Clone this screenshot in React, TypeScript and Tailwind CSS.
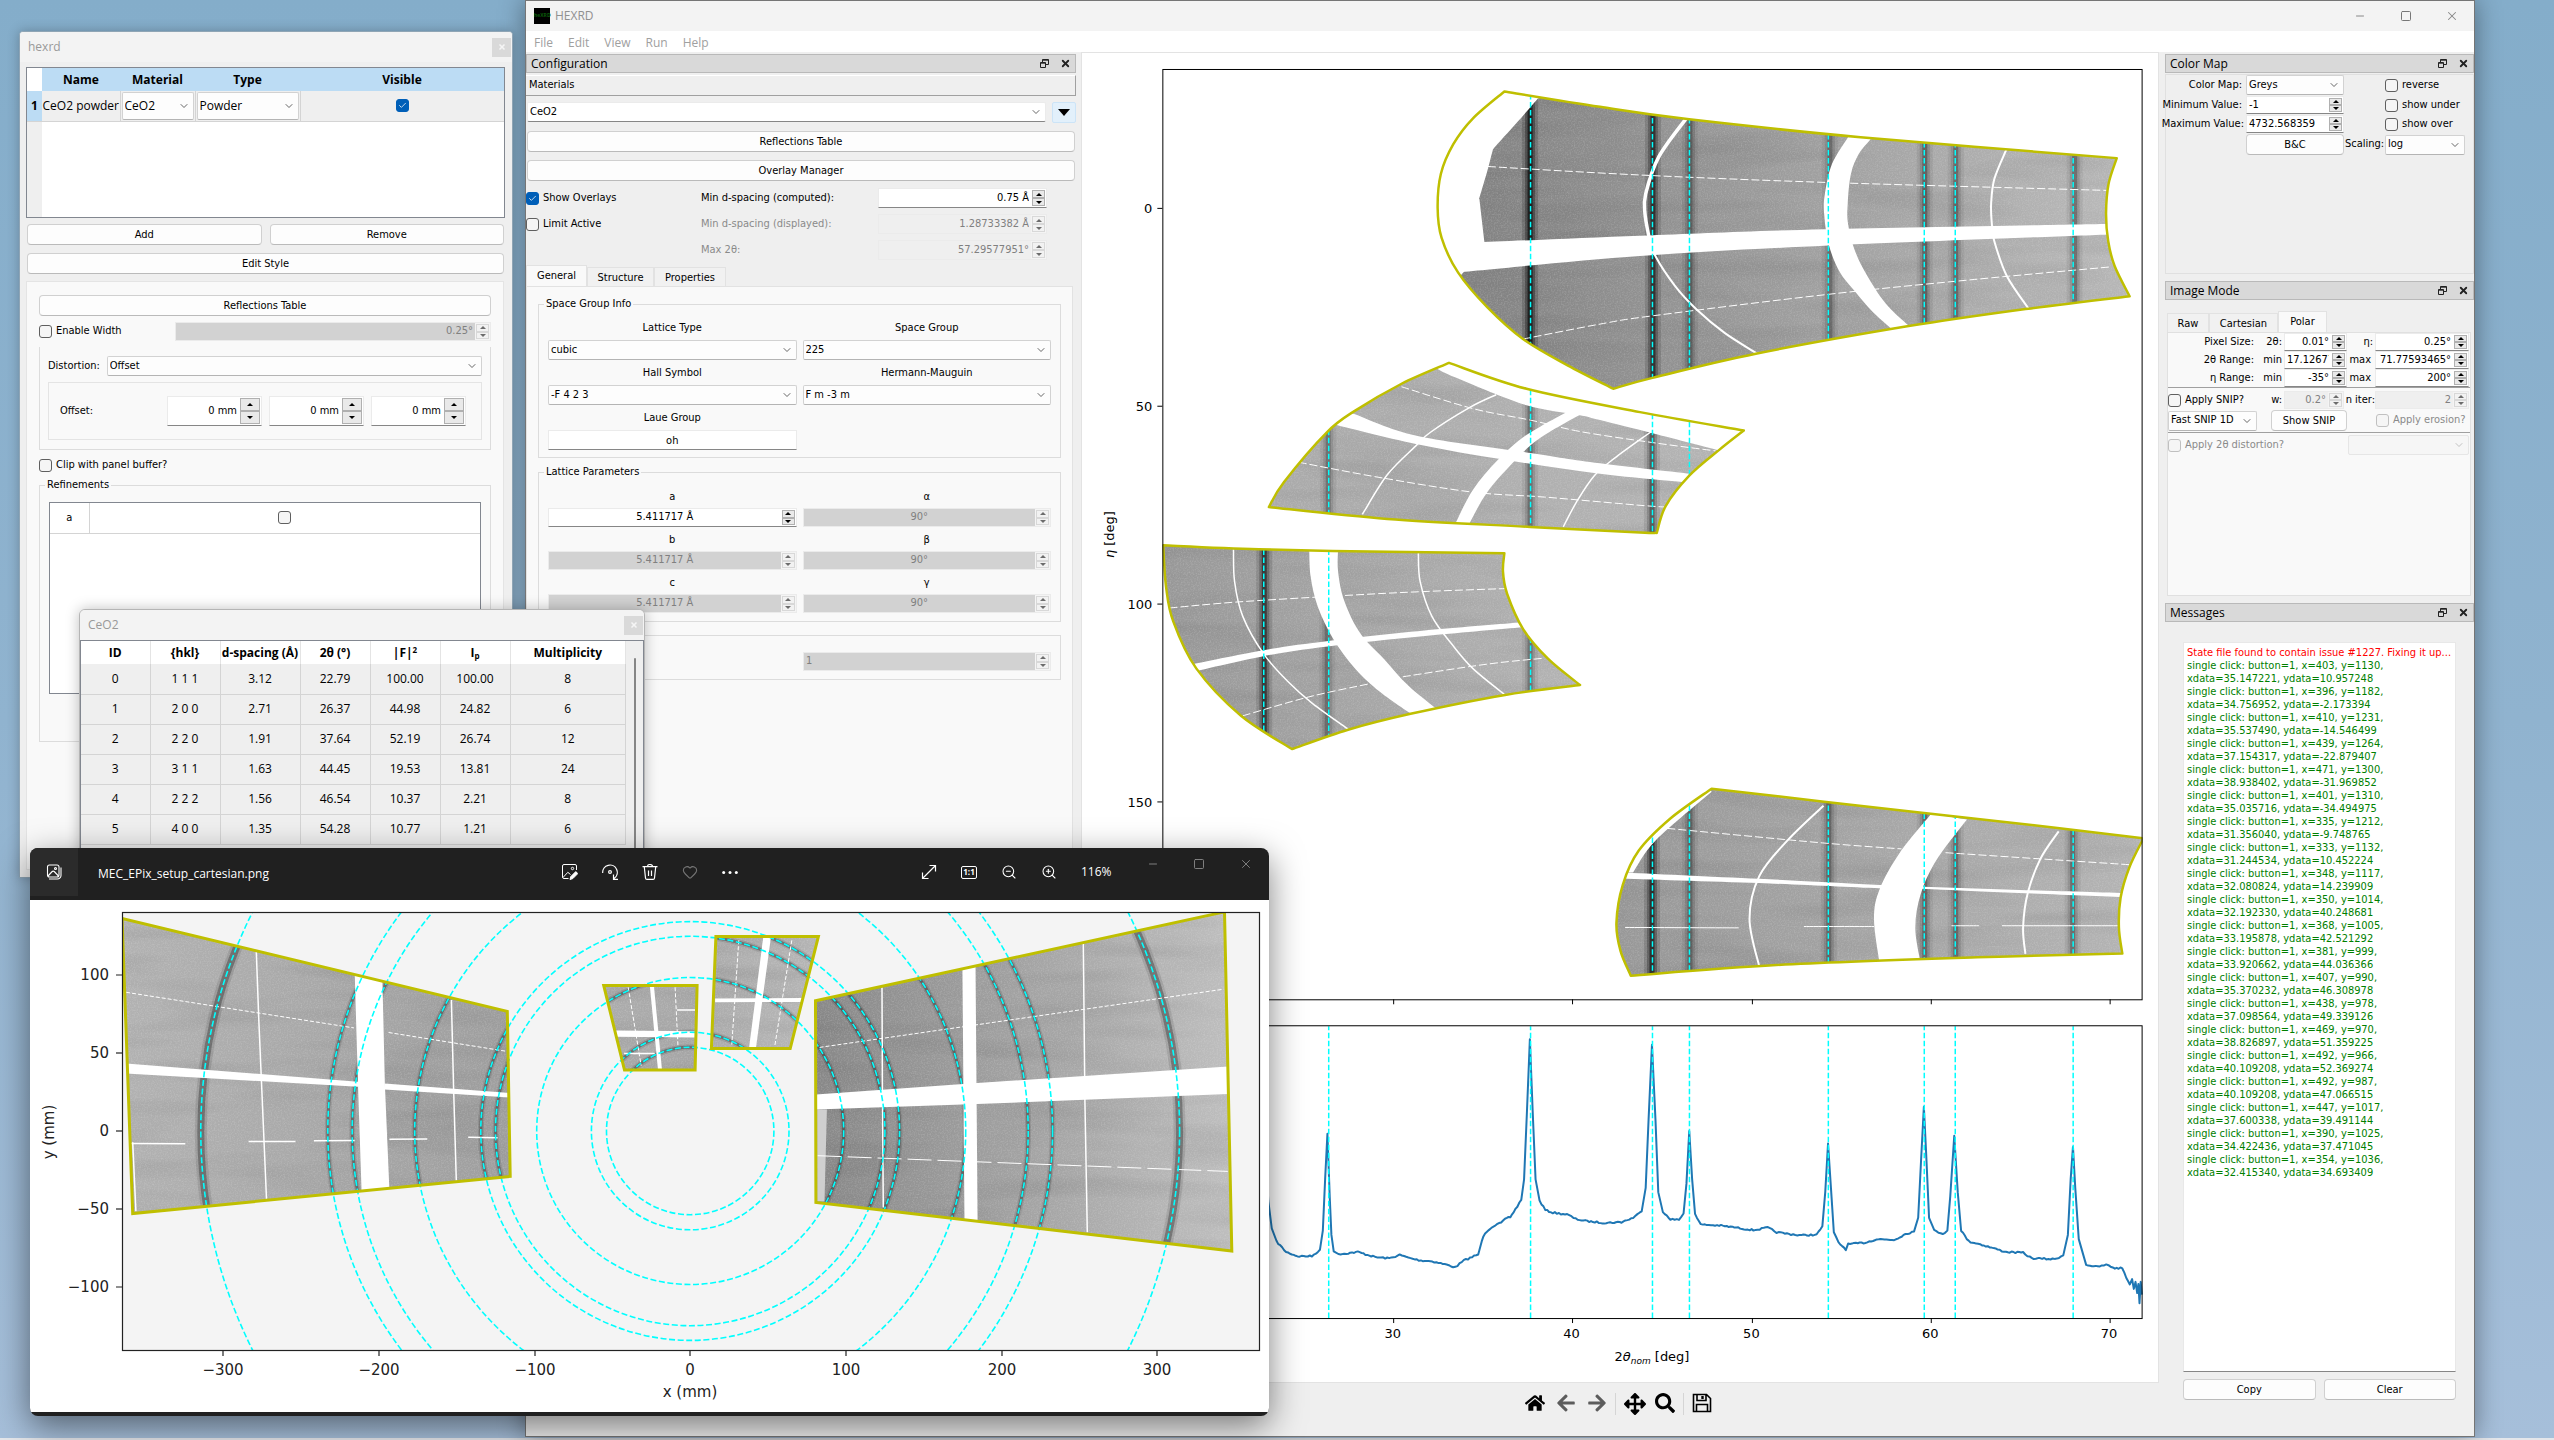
import React, { useId } from "react";
import { ChevronDown, Heart, Square, X, Minus, ZoomIn, ZoomOut, Check } from "lucide-react";
import { FaArrowLeft, FaArrowRight, FaArrowsAlt, FaHome, FaSearch } from "react-icons/fa";

/* ---------- geometry helpers ---------- */

type Pt = [number, number];
type Tile = (s: string) => Pt[];

const tile =
  (ox: number, oy: number, kx: number, ky: number): Tile =>
  (s) =>
    s.split(" ").map((p) => {
      const [x, y] = p.split(",").map(Number);
      return [ox + x / kx, oy + y / ky];
    });

const fmt = (n: number) => n.toFixed(1);

function curve(pts: Pt[], start: boolean): string {
  let d = `${start ? "M" : "L"}${fmt(pts[0][0])} ${fmt(pts[0][1])}`;
  for (let i = 0; i < pts.length - 1; i++) {
    const a = pts[Math.max(i - 1, 0)];
    const b = pts[i];
    const c = pts[i + 1];
    const e = pts[Math.min(i + 2, pts.length - 1)];
    d += `C${fmt(b[0] + (c[0] - a[0]) / 6)} ${fmt(b[1] + (c[1] - a[1]) / 6)} ${fmt(c[0] - (e[0] - b[0]) / 6)} ${fmt(
      c[1] - (e[1] - b[1]) / 6
    )} ${fmt(c[0])} ${fmt(c[1])}`;
  }
  return d;
}

const closed = (t: Tile, edges: string[]) => edges.map((e, i) => curve(t(e), i === 0)).join("") + "Z";
const open = (t: Tile, e: string) => curve(t(e), true);
const straight = (t: Tile, e: string) => "M" + t(e).map(([x, y]) => `${fmt(x)} ${fmt(y)}`).join("L");

/* ---------- polar view ---------- */

interface PanelData {
  id: string;
  t: Tile;
  outline: string[];
  gaps: string[][];
  lines: [string, number][];
  dashes: string[];
  bands: [number, number][];
  tones: [string, string];
}

const P = tile(1080, 0, 2.8, 2.0103);
const Q = tile(1260, 770, 1.7422, 2.3403);

const PEAKS = [1263, 1328, 1530, 1652, 1689, 1828, 1924, 1955, 2073];

const PANELS: PanelData[] = [
  {
    id: "p1",
    t: P,
    outline: [
      "1188,184 1456,215 1706,240 2186,276 2904,318",
      "2904,318 2881,370 2874,430 2880,485 2898,535 2940,596",
      "2940,596 2656,621 2321,656 1896,711 1603,760 1493,782",
      "1493,782 1365,735 1240,682 1140,618 1058,548 1012,478 1001,418 1010,350 1045,290 1100,238 1188,184",
    ],
    gaps: [
      ["1170,150 1290,196", "1282,198 1225,245 1156,300", "1156,300 1140,345", "1117,400 1118,400", "1132,487 1132,500", "1058,560 950,560", "950,150 1170,150"],
      ["1100,488 1568,474 2086,461 2900,450", "2900,471 2096,494 1568,515 1040,549"],
      ["2157,266 2151,276 2106,330 2086,390 2084,430 2096,490 2126,545 2169,585 2221,628 2290,672", "2345,668 2321,655 2256,610 2201,550 2168,500 2151,450 2150,410 2159,350 2181,310 2214,280 2225,268"],
    ],
    lines: [
      ["1700,236 1621,315 1584,390 1582,430 1594,480", 3.5],
      ["1594,480 1611,515 1666,575 1726,622 1806,670 1900,713", 2],
      ["2595,300 2561,360 2552,410 2554,450 2561,485 2596,555 2660,624", 2],
    ],
    dashes: ["1142,335 1568,352 2096,367 2876,383", "1240,682 1456,652 1606,635 2096,592 2506,562 2885,537"],
    bands: [[1530, 1], [1653, 0.8], [1690, 0.4], [1830, 0.35], [1925, 0.45], [1956, 0.4], [2075, 0.4]],
    tones: ["#808080", "#bababa"],
  },
  {
    id: "p2",
    t: P,
    outline: [
      "1033,730 1250,782 1568,829 1859,866",
      "1859,866 1790,905 1706,957 1640,1018 1615,1072",
      "1615,1072 1568,1071 1260,1060 860,1044 528,1020",
      "528,1020 570,970 690,870 770,826 900,772 1033,730",
    ],
    gaps: [
      ["990,725 1000,742 1080,768 1250,815 1400,835 1456,845 1606,872 1800,908", "1880,860 1400,790 1033,720"],
      ["745,827 765,832 945,877 1250,910 1456,932 1720,954", "1720,972 1456,953 1190,925 940,893 700,852"],
      ["1370,826 1250,875 1170,925 1100,985 1050,1054", "1088,1056 1140,990 1220,925 1290,880 1420,826"],
    ],
    lines: [
      ["1165,794 1090,820 980,870 940,897 860,955 790,1035", 1.5],
      ["1600,868 1500,920 1440,957 1390,1010 1353,1060", 1.5],
    ],
    dashes: ["900,778 1100,822 1260,845 1400,868 1600,890 1780,907", "612,930 850,962 1100,990 1300,1000 1560,1016 1640,1020"],
    bands: [[1328, 0.35], [1530, 0.4], [1652, 0.55]],
    tones: ["#aaaaaa", "#b4b4b4"],
  },
  {
    id: "p3",
    t: P,
    outline: [
      "232,1097 500,1105 860,1110 1188,1113",
      "1188,1113 1184,1150 1196,1195 1240,1265 1310,1325 1400,1378",
      "1400,1378 1190,1398 925,1436 750,1468 593,1507",
      "593,1507 450,1440 325,1345 260,1250 240,1180 232,1097",
    ],
    gaps: [
      ["300,1338 513,1308 700,1289 1000,1266 1250,1251", "1250,1261 1000,1277 720,1298 513,1320 300,1354"],
      ["641,1100 645,1160 665,1220 708,1285 770,1345 840,1392 935,1440", "1005,1430 920,1380 850,1325 785,1275 740,1210 722,1150 722,1104"],
    ],
    lines: [
      ["429,1105 432,1170 455,1240 513,1315 580,1370 650,1415 750,1467", 1.5],
      ["947,1112 952,1170 985,1240 1040,1295 1100,1345 1190,1398", 1.5],
    ],
    dashes: ["250,1223 440,1211 740,1198 960,1190 1190,1184", "455,1440 640,1402 820,1374 900,1362 1140,1336 1300,1324"],
    bands: [[1264, 0.75], [1327, 0.35], [1530, 0.35]],
    tones: ["#989898", "#b4b4b4"],
  },
  {
    id: "p4",
    t: Q,
    outline: [
      "787,45 1130,98 1390,137 1540,161",
      "1540,161 1515,230 1500,300 1497,370 1503,431",
      "1503,431 1250,440 900,458 646,483",
      "646,483 628,425 621,360 632,270 660,190 715,115 787,45",
    ],
    gaps: [
      ["630,241 870,256 1090,271 1300,281 1520,290", "1520,300 1300,288 1160,280 1088,279 870,266 620,255"],
      ["1170,104 1115,195 1080,280 1070,350 1080,455", "1151,452 1142,370 1152,290 1180,210 1232,117"],
      ["650,241 690,165 787,52", "780,40 640,150 630,241"],
    ],
    lines: [
      ["982,85 920,165 870,250 853,350 870,462", 2],
      ["1392,145 1360,210 1338,290 1330,370 1334,432", 2],
      ["636,370 834,371", 1],
      ["948,368 1070,368", 1],
      ["1205,366 1253,366", 1],
      ["1293,366 1495,366", 1],
    ],
    dashes: ["710,138 980,172 1118,186", "1195,195 1515,223"],
    bands: [[1652, 0.85], [1690, 0.4], [1829, 0.4], [1925, 0.4], [1956, 0.4], [2073, 0.4]],
    tones: ["#989898", "#b4b4b4"],
  },
];

function Grain() {
  return (
    <defs>
      <filter id="grain" x="0" y="0" width="100%" height="100%">
        <feTurbulence type="fractalNoise" baseFrequency="0.7" numOctaves="2" seed="4" />
        <feColorMatrix values="0 0 0 0 1  0 0 0 0 1  0 0 0 0 1  1.2 0 0 0 -0.48" />
      </filter>
      <filter id="streak" x="0" y="0" width="100%" height="100%">
        <feTurbulence type="fractalNoise" baseFrequency="0.006 0.05" numOctaves="2" seed="9" />
        <feColorMatrix values="0 0 0 0 0  0 0 0 0 0  0 0 0 0 0  0.9 0 0 0 -0.4" />
      </filter>
    </defs>
  );
}

function PolarPanel({ p }: { p: PanelData }) {
  const d = closed(p.t, p.outline);
  return (
    <g>
      <clipPath id={p.id}>
        <path d={d} />
      </clipPath>
      <linearGradient id={p.id + "g"}>
        <stop offset="0" stopColor={p.tones[0]} />
        <stop offset="1" stopColor={p.tones[1]} />
      </linearGradient>
      <g clipPath={`url(#${p.id})`}>
        <path d={d} fill={`url(#${p.id}g)`} />
        <rect x="1162" y="70" width="981" height="930" filter="url(#streak)" opacity="0.18" />
        <rect x="1162" y="70" width="981" height="930" filter="url(#grain)" opacity="0.3" />
        {p.bands.map(([x, k]) => (
          <g key={x} stroke="#000">
            <line x1={x} x2={x} y1="70" y2="1000" strokeWidth="16" opacity={0.16 * k} />
            <line x1={x} x2={x} y1="70" y2="1000" strokeWidth="10" opacity={0.3 * k} />
            <line x1={x} x2={x} y1="70" y2="1000" strokeWidth="5" opacity={0.6 * k} />
          </g>
        ))}
        {p.gaps.map((g, i) => (
          <path key={i} d={closed(p.t, g)} fill="#fff" />
        ))}
        {p.lines.map(([s, w]) => (
          <path key={s} d={open(p.t, s)} fill="none" stroke="#fff" strokeWidth={w} />
        ))}
        {p.dashes.map((s) => (
          <path key={s} d={open(p.t, s)} fill="none" stroke="#fff" strokeWidth="1" strokeDasharray="8 3" />
        ))}
        {PEAKS.map((x) => (
          <line key={x} x1={x + 0.5} x2={x + 0.5} y1="70" y2="1000" stroke="#00ffff" strokeWidth="1.5" strokeDasharray="5.5 2.5" />
        ))}
      </g>
      <path d={d} fill="none" stroke="#bfbf00" strokeWidth="2.5" strokeLinejoin="round" />
    </g>
  );
}

const LINEOUT =
  "12,960 14,1010 20,1075 28,1105 45,1130 65,1140 90,1140 104,1125 109,1080 113,960 117,853 121,1000 124,1090 128,1130 140,1135 170,1130 200,1142 225,1145 243,1137 262,1145 280,1150 300,1152 325,1160 340,1166 355,1150 380,1136 386,1105 392,1085 405,1070 420,1062 430,1050 436,1048 445,1030 455,1008 460,960 465,800 470,632 475,800 480,960 487,1010 497,1032 510,1038 535,1042 550,1053 570,1058 600,1062 630,1060 650,1050 665,1035 672,980 677,820 683,645 689,820 694,990 702,1035 715,1053 730,1055 738,1040 743,970 748,847 753,960 758,1040 768,1066 800,1068 830,1073 860,1079 885,1073 900,1084 940,1091 970,1090 980,1070 985,990 990,876 995,980 1000,1085 1008,1108 1021,1124 1025,1112 1055,1108 1075,1100 1105,1102 1125,1088 1140,1082 1147,1050 1152,920 1157,790 1161,900 1166,1050 1175,1080 1190,1087 1198,1080 1203,1000 1210,858 1216,990 1222,1080 1235,1105 1255,1112 1275,1120 1300,1130 1330,1132 1345,1145 1385,1147 1400,1138 1408,1090 1413,960 1417,884 1421,980 1427,1100 1440,1160 1460,1165 1475,1160 1490,1168 1503,1168 1510,1190 1516,1205 1520,1195 1523,1215 1526,1200 1529,1225 1531,1205 1533,1250 1535,1200 1537,1230";

function lineout(): string {
  const pts = Q(LINEOUT);
  const out: Pt[] = [];
  let seed = 7;
  const rnd = () => {
    seed = (seed * 16807) % 2147483647;
    return seed / 2147483647 - 0.5;
  };
  for (let i = 0; i < pts.length - 1; i++) {
    const [ax, ay] = pts[i];
    const [bx, by] = pts[i + 1];
    const flat = Math.abs(by - ay) < 12;
    const n = flat ? Math.max(1, Math.round((bx - ax) / 2)) : 1;
    for (let k = 0; k < n; k++) {
      const f = k / n;
      out.push([ax + (bx - ax) * f, ay + (by - ay) * f + (flat ? rnd() * 1.6 : 0)]);
    }
  }
  out.push(pts[pts.length - 1]);
  return "M" + out.map(([x, y]) => `${fmt(x)} ${fmt(y)}`).join("L");
}

function PolarPlot() {
  return (
    <svg viewBox="1082 53 1076 1330" className="h-full w-full" fontFamily="'DejaVu Sans', sans-serif" fontSize="13" role="img" aria-label="Polar view">
      <Grain />
      <clipPath id="axTop">
        <rect x="1162" y="69" width="981" height="932" />
      </clipPath>
      <g clipPath="url(#axTop)">
        {PANELS.map((p) => (
          <PolarPanel key={p.id} p={p} />
        ))}
      </g>
      <rect x="1162.5" y="69.5" width="980" height="931" fill="none" stroke="#000" />
      <path d={lineout()} fill="none" stroke="#1f77b4" strokeWidth="2" strokeLinejoin="round" />
      {PEAKS.map((x) => (
        <line key={x} x1={x + 0.5} x2={x + 0.5} y1="1319" y2="1027" stroke="#00ffff" strokeWidth="1.5" strokeDasharray="5.5 2.5" />
      ))}
      <rect x="1162.5" y="1026.5" width="980" height="293" fill="none" stroke="#000" />
      {[30, 40, 50, 60, 70].map((v, i) => {
        const x = Math.round(1393 + i * 179.3) + 0.5;
        return (
          <g key={v}>
            <path d={`M${x} 1000v5M${x} 1319v5`} stroke="#000" />
            <text x={x - 1} y="1339" textAnchor="middle">
              {v}
            </text>
          </g>
        );
      })}
      {[0, 50, 100, 150].map((v) => {
        const y = Math.round(208 + v * 3.961) + 0.5;
        return (
          <g key={v}>
            <path d={`M1157 ${y}h5`} stroke="#000" />
            <text x="1152" y={y + 5} textAnchor="end">
              {v}
            </text>
          </g>
        );
      })}
      <text x="1652" y="1362" textAnchor="middle">
        2<tspan fontStyle="italic">θ</tspan>
        <tspan fontStyle="italic" fontSize="9" dy="3">
          nom
        </tspan>
        <tspan dy="-3"> [deg]</tspan>
      </text>
      <text transform="translate(1114 535) rotate(-90)" textAnchor="middle">
        <tspan fontStyle="italic">η</tspan> [deg]
      </text>
    </svg>
  );
}

/* ---------- cartesian view ---------- */

const D = tile(20, 840, 2.45, 2.6133);
const RADII = [83.7, 98.8, 153.5, 194.7, 209.4, 275.5, 338, 362.4, 489.4];

interface FlatPanel {
  id: string;
  outline: string;
  gaps: string[];
  lines: string[];
  dashes: string[];
  long: string[];
  tones: [string, string];
  pale?: string;
}

const FLAT: FlatPanel[] = [
  {
    id: "c1",
    outline: "250,205 1194,448 1201,879 276,976",
    gaps: [
      "820,350 888,365 894,640 905,915 837,920 828,640",
      "260,584 828,632 828,645 260,610",
      "893,636 1200,661 1200,673 893,652",
    ],
    lines: ["579,292 585,470 604,938", "1057,418 1062,640 1069,890", "276,790 284,970", "272,793 405,794", "560,788 675,788", "720,786 820,785", "905,782 998,781", "1098,777 1170,778"],
    dashes: ["260,398 818,491", "903,503 1190,552"],
    long: [],
    tones: ["#b2b2b2", "#9e9e9e"],
  },
  {
    id: "c2",
    outline: "1430,380 1659,380 1654,601 1481,601",
    gaps: ["1460,498 1657,500 1657,516 1460,514", "1543,380 1553,380 1573,601 1563,601"],
    lines: ["1480,558 1555,558", "1610,444 1655,444"],
    dashes: ["1490,385 1522,590", "1605,385 1612,540"],
    long: [],
    tones: ["#acacac", "#a8a8a8"],
  },
  {
    id: "c3",
    outline: "1705,252 1956,252 1887,545 1694,545",
    gaps: ["1821,252 1840,252 1803,545 1786,545", "1703,414 1920,413 1918,423 1703,424"],
    lines: [],
    dashes: ["1761,262 1744,535", "1891,262 1849,540"],
    long: [],
    tones: ["#acacac", "#b8b8b8"],
  },
  {
    id: "c4",
    outline: "1949,420 2951,188 2969,1074 1950,947",
    gaps: ["2309,330 2341,320 2346,1000 2314,1000", "1950,665 2345,635 2960,592 2960,664 2345,690 1950,704"],
    lines: ["2112,385 2113,650 2115,960", "2605,268 2609,680 2615,1025"],
    dashes: ["1959,542 2949,390"],
    long: ["1954,825 2959,866"],
    tones: ["#888888", "#bebebe"],
    pale: "1953,704 1977,704 1971,945 1953,945",
  },
];

function CartesianPlot() {
  const cx = 690.2;
  const cy = 1131;
  return (
    <svg viewBox="30 900 1239 512" className="block w-full" fontFamily="'DejaVu Sans', sans-serif" fontSize="15" role="img" aria-label="Cartesian view">
      <rect x="122" y="912" width="1138" height="438" fill="#f4f4f4" />
      <clipPath id="axCart">
        <rect x="122" y="912" width="1138" height="438" />
      </clipPath>
      <g clipPath="url(#axCart)">
        {FLAT.map((p) => (
          <g key={p.id}>
            <clipPath id={p.id}>
              <path d={straight(D, p.outline) + "Z"} />
            </clipPath>
            <linearGradient id={p.id + "g"}>
              <stop offset="0" stopColor={p.tones[0]} />
              <stop offset="1" stopColor={p.tones[1]} />
            </linearGradient>
            <g clipPath={`url(#${p.id})`}>
              <path d={straight(D, p.outline) + "Z"} fill={`url(#${p.id}g)`} />
              <rect x="122" y="912" width="1138" height="438" filter="url(#streak)" opacity="0.18" />
              <rect x="122" y="912" width="1138" height="438" filter="url(#grain)" opacity="0.3" />
              {RADII.map((r) => (
                <g key={r} fill="none" stroke="#000">
                  <circle cx={cx} cy={cy} r={r} strokeWidth={r > 450 ? 12 : 6} opacity="0.1" />
                  <circle cx={cx} cy={cy} r={r} strokeWidth={r > 450 ? 7 : 3} opacity="0.28" />
                </g>
              ))}
              {p.pale && <path d={straight(D, p.pale) + "Z"} fill="#cfcfcf" />}
              {p.gaps.map((g) => (
                <path key={g} d={straight(D, g) + "Z"} fill="#fff" />
              ))}
              {p.lines.map((g) => (
                <path key={g} d={straight(D, g)} fill="none" stroke="#fff" strokeWidth="1.5" />
              ))}
              {p.dashes.map((g) => (
                <path key={g} d={straight(D, g)} fill="none" stroke="#fff" strokeDasharray="4 2" />
              ))}
              {p.long.map((g) => (
                <path key={g} d={straight(D, g)} fill="none" stroke="#fff" strokeDasharray="24 6" />
              ))}
            </g>
          </g>
        ))}
        {RADII.map((r) => (
          <circle key={r} cx={cx} cy={cy} r={r} fill="none" stroke="#00ffff" strokeWidth="1.6" strokeDasharray="6 2.6" />
        ))}
        {FLAT.map((p) => (
          <path key={p.id} d={straight(D, p.outline) + "Z"} fill="none" stroke="#bfbf00" strokeWidth="3" />
        ))}
      </g>
      <rect x="122.5" y="912.5" width="1137" height="438" fill="none" stroke="#222" strokeWidth="1.2" />
      {[-300, -200, -100, 0, 100, 200, 300].map((v) => {
        const x = Math.round(cx + v * 1.557);
        return (
          <g key={v}>
            <path d={`M${x} 1350v6`} stroke="#222" strokeWidth="1.2" />
            <text x={x} y="1375" textAnchor="middle" fill="#222">
              {String(v).replace("-", "−")}
            </text>
          </g>
        );
      })}
      {[100, 50, 0, -50, -100].map((v) => {
        const y = Math.round(cy - v * 1.561);
        return (
          <g key={v}>
            <path d={`M122 ${y}h-6`} stroke="#222" strokeWidth="1.2" />
            <text x="109" y={y + 5} textAnchor="end" fill="#222">
              {String(v).replace("-", "−")}
            </text>
          </g>
        );
      })}
      <text x="690" y="1397" textAnchor="middle" fill="#222">
        x (mm)
      </text>
      <text transform="translate(54 1132) rotate(-90)" textAnchor="middle" fill="#222">
        y (mm)
      </text>
    </svg>
  );
}

/* ---------- controls ---------- */

function Btn({ children, className = "" }: { children: React.ReactNode; className?: string }) {
  return (
    <button type="button" className={`h-[21px] rounded border border-[#d0d0d0] border-b-[#bababa] bg-[#fdfdfd] leading-none ${className}`}>
      {children}
    </button>
  );
}

function Combo({ value, label, className = "", look = "border-[#d2d2d2] border-b-[#b4b4b4] bg-[#fdfdfd]", disabled = false }: { value: string; label: string; className?: string; look?: string; disabled?: boolean }) {
  return (
    <div className={`relative ${className}`}>
      <select aria-label={label} disabled={disabled} defaultValue={value} className={`h-5 w-full appearance-none rounded-xs border pl-0.5 ${look}`}>
        <option>{value}</option>
      </select>
      <ChevronDown className={`pointer-events-none absolute top-1 right-1 size-3 ${disabled ? "text-[#bbb]" : "text-[#555]"}`} strokeWidth={1.8} />
    </div>
  );
}

function Spin({
  value,
  label,
  className = "h-[19px]",
  align = "text-right",
  off = "",
  wide = false,
}: {
  value: string;
  label: string;
  className?: string;
  align?: string;
  off?: "" | "dark" | "light";
  wide?: boolean;
}) {
  const disabled = off !== "";
  const field = off === "dark" ? "bg-[#d2d2d2] text-[#808080]" : off === "light" ? "bg-[#efefef] text-[#808080]" : "bg-white text-black";
  return (
    <div className={`flex border border-[#ebebeb] ${disabled ? "bg-[#f4f4f4]" : "border-b-[#868686] bg-white"} ${className}`}>
      <input aria-label={label} disabled={disabled} defaultValue={value} className={`w-0 min-w-0 flex-1 px-0.5 ${align} ${field}`} />
      <div className={`flex shrink-0 flex-col p-px ${wide ? "w-[22px]" : "w-[15px]"}`}>
        {["up", "down"].map((dir) => (
          <button
            key={dir}
            type="button"
            disabled={disabled}
            aria-label={`${label} ${dir}`}
            className={`grid min-h-0 flex-1 place-items-center border ${disabled ? "border-[#d8d8d8] bg-[#f2f2f2]" : "border-[#b0b0b0] bg-[#e9e9e9]"}`}
          >
            <svg viewBox="0 0 6 3" className={`h-[3px] w-1.5 ${disabled ? "fill-[#6c6c6c]" : "fill-black"}`}>
              <path d={dir === "up" ? "M0 3L3 0L6 3Z" : "M0 0L3 3L6 0Z"} />
            </svg>
          </button>
        ))}
      </div>
    </div>
  );
}

function Tick({ label, checked = false, disabled = false, hidden = false, className = "" }: { label: string; checked?: boolean; disabled?: boolean; hidden?: boolean; className?: string }) {
  const id = useId();
  return (
    <span className={`flex items-center gap-1 ${className}`}>
      <span className="grid shrink-0">
        <input
          id={id}
          type="checkbox"
          defaultChecked={checked}
          disabled={disabled}
          aria-label={label}
          className="col-start-1 row-start-1 size-[13px] appearance-none rounded-[3px] border border-[#5f5f5f] bg-[#f5f5f5] checked:border-[#005fb8] checked:bg-[#005fb8] disabled:border-[#c0c0c0]"
        />
        {checked && <Check className="pointer-events-none col-start-1 row-start-1 m-auto size-[9px] text-white" strokeWidth={2} />}
      </span>
      {!hidden && (
        <label htmlFor={id} className={`whitespace-nowrap ${disabled ? "text-[#8a8a8a]" : ""}`}>
          {label}
        </label>
      )}
    </span>
  );
}

function DockTitle({ children }: { children: React.ReactNode }) {
  return (
    <div className="flex h-[19px] shrink-0 items-center border border-[#b9b9b9] bg-[#d9d9d9] pr-1 pl-1 font-['Open_Sans',sans-serif] text-[12px]">
      <span className="flex-1">{children}</span>
      <button type="button" aria-label="Float" className="mr-[11px]">
        <svg viewBox="0 0 9 9" className="size-[9px] fill-none stroke-[#222]">
          <path d="M2.5 3.5V.5h6v5h-3M2.5 1.2h6M.5 3.5h5v5h-5zM.5 4.2h5" />
        </svg>
      </button>
      <button type="button" aria-label="Close">
        <X className="size-[11px] text-[#222]" strokeWidth={4} />
      </button>
    </div>
  );
}

function Tabs({ items, active }: { items: [string, string][]; active: string }) {
  return (
    <div role="tablist" className="flex h-[21px] items-end">
      {items.map(([name, w]) => (
        <button
          key={name}
          type="button"
          role="tab"
          aria-selected={name === active}
          className={`border border-b-0 border-[#e2e2e2] leading-none ${w} ${name === active ? "h-[21px] bg-[#f9f9f9] pb-0.5" : "h-[19px] bg-[#f1f1f1]"}`}
        >
          {name}
        </button>
      ))}
    </div>
  );
}

function Field({ label, children, gap }: { label: string; children: React.ReactNode; gap: string }) {
  return (
    <div className={`flex flex-col ${gap}`}>
      <span className="h-3.5 text-center leading-[14px]">{label}</span>
      {children}
    </div>
  );
}

function ToolTitle({ children, right }: { children: React.ReactNode; right: string }) {
  return (
    <div className="flex h-[30px] shrink-0 items-center bg-[#f3f3f3] font-['Open_Sans',sans-serif] text-[12px] text-[#999]">
      <span className="flex-1 pl-2">{children}</span>
      <button type="button" aria-label="Close" className={`grid size-[19px] place-items-center bg-[#d9d9d9] text-[#f5f5f5] ${right}`}>
        <X className="size-2" strokeWidth={5} />
      </button>
    </div>
  );
}

/* ---------- main window ---------- */

function Configuration() {
  return (
    <aside className="flex w-[550px] shrink-0 flex-col pt-0.5">
      <DockTitle>Configuration</DockTitle>
      <div className="mt-0.5 flex h-[21px] items-center border-t border-r border-b border-t-white border-r-[#a0a0a0] border-b-[#a0a0a0] pl-[3px]">Materials</div>
      <div className="mt-1.5 flex gap-1.5 pl-px">
        <Combo label="Material" value="CeO2" className="flex-1" look="border-[#ebebeb] border-b-[#868686] bg-white" />
        <button type="button" aria-label="Material options" className="grid h-[21px] w-6 place-items-center rounded-xs border border-[#cce4f7] bg-[#e2f0fb]">
          <svg viewBox="0 0 12 7" className="h-[7px] w-3">
            <path d="M0 0h12L6 7z" />
          </svg>
        </button>
      </div>
      <Btn className="mx-px mt-2">Reflections Table</Btn>
      <Btn className="mx-px mt-2">Overlay Manager</Btn>
      <div className="mt-[7px] grid grid-cols-[175px_177px_169px] gap-y-1.5">
        <Tick label="Show Overlays" checked className="h-5" />
        <span className="self-center">Min d-spacing (computed):</span>
        <Spin label="Min d-spacing computed" value="0.75 Å" className="h-5" />
        <Tick label="Limit Active" className="h-5" />
        <span className="self-center text-[#8a8a8a]">Min d-spacing (displayed):</span>
        <Spin label="Min d-spacing displayed" value="1.28733382 Å" off="light" className="h-5" />
        <span className="col-start-2 self-center text-[#8a8a8a]">Max 2θ:</span>
        <Spin label="Max 2θ" value="57.29577951°" off="light" className="h-5" />
      </div>
      <div className="mt-[5px]">
        <Tabs items={[["General", "w-[61px]"], ["Structure", "w-[67px]"], ["Properties", "w-[72px]"]]} active="General" />
      </div>
      <div className="mr-[3px] flex-1 border border-[#e2e2e2] bg-[#f9f9f9] px-[11px] pt-2.5">
        <fieldset className="border border-[#dcdcdc] px-[9px] pb-[7px]">
          <legend className="-ml-1 px-0.5 leading-[14px]">Space Group Info</legend>
          <div className="grid grid-cols-2 gap-x-1.5 gap-y-1.5 pt-2.5">
            <Field label="Lattice Type" gap="gap-[5px]">
              <Combo label="Lattice Type" value="cubic" />
            </Field>
            <Field label="Space Group" gap="gap-[5px]">
              <Combo label="Space Group" value="225" />
            </Field>
            <Field label="Hall Symbol" gap="gap-[5px]">
              <Combo label="Hall Symbol" value="-F 4 2 3" />
            </Field>
            <Field label="Hermann-Mauguin" gap="gap-[5px]">
              <Combo label="Hermann-Mauguin" value="F m -3 m" />
            </Field>
            <Field label="Laue Group" gap="gap-[5px]">
              <input aria-label="Laue Group" defaultValue="oh" className="h-5 border border-[#ebebeb] border-b-[#868686] bg-white text-center" />
            </Field>
          </div>
        </fieldset>
        <fieldset className="mt-[7px] border border-[#dcdcdc] px-[9px] pb-2">
          <legend className="-ml-1 px-0.5 leading-[14px]">Lattice Parameters</legend>
          <div className="grid grid-cols-2 gap-x-1.5 gap-y-1.5 pt-[11px]">
            {["a", "α", "b", "β", "c", "γ"].map((n, i) => (
              <Field key={n} label={n} gap="gap-1">
                <Spin label={n} value={i % 2 ? "90°" : "5.411717 Å"} off={i === 0 ? "" : "dark"} align="text-center" />
              </Field>
            ))}
          </div>
        </fieldset>
        <div className="mt-[13px] flex border border-[#dcdcdc] px-[9px] pt-4 pb-2">
          <Spin label="Count" value="1" off="dark" align="text-left" className="ml-auto h-[19px] w-[248px]" />
        </div>
      </div>
      <div className="mt-[-1px] mb-[20px] mr-px border-b border-[#b0b0b0]" />
    </aside>
  );
}

function SaveIcon() {
  return (
    <svg viewBox="0 0 20 20" className="size-5 fill-none stroke-black stroke-[1.6]">
      <path d="M1.5 1.5h13l4 4v13h-17zM5 1.5v6h9v-6M4.5 18.5v-7h11v7" />
      <path d="M10.5 3v3" className="stroke-[2.4]" />
    </svg>
  );
}

function Canvas() {
  return (
    <main className="ml-[5px] flex min-w-0 flex-1 flex-col">
      <div className="min-h-0 flex-1 border border-[#e3e3e3] bg-white">
        <PolarPlot />
      </div>
      <div className="flex h-[53px] shrink-0 items-start justify-center pt-2.5 pr-[3px]">
        <button type="button" aria-label="Home" className="mr-[11px]">
          <FaHome className="size-5" />
        </button>
        <button type="button" aria-label="Back" className="mr-[11px] text-[#5c5c5c]">
          <FaArrowLeft className="size-5" />
        </button>
        <button type="button" aria-label="Forward" className="text-[#5c5c5c]">
          <FaArrowRight className="size-5" />
        </button>
        <span className="mx-2 h-[22px] w-px bg-[#d5d5d5]" />
        <button type="button" aria-label="Pan" className="mr-[9px]">
          <FaArrowsAlt className="size-[22px]" />
        </button>
        <button type="button" aria-label="Zoom">
          <FaSearch className="size-5" />
        </button>
        <span className="mx-2 h-[22px] w-px bg-[#d5d5d5]" />
        <button type="button" aria-label="Save">
          <SaveIcon />
        </button>
      </div>
    </main>
  );
}

const CLICKS: [number, number, string, string][] = [
  [403, 1130, "35.147221", "10.957248"],
  [396, 1182, "34.756952", "-2.173394"],
  [410, 1231, "35.537490", "-14.546499"],
  [439, 1264, "37.154317", "-22.879407"],
  [471, 1300, "38.938402", "-31.969852"],
  [401, 1310, "35.035716", "-34.494975"],
  [335, 1212, "31.356040", "-9.748765"],
  [333, 1132, "31.244534", "10.452224"],
  [348, 1117, "32.080824", "14.239909"],
  [350, 1014, "32.192330", "40.248681"],
  [368, 1005, "33.195878", "42.521292"],
  [381, 999, "33.920662", "44.036366"],
  [407, 990, "35.370232", "46.308978"],
  [438, 978, "37.098564", "49.339126"],
  [469, 970, "38.826897", "51.359225"],
  [492, 966, "40.109208", "52.369274"],
  [492, 987, "40.109208", "47.066515"],
  [447, 1017, "37.600338", "39.491144"],
  [390, 1025, "34.422436", "37.471045"],
  [354, 1036, "32.415340", "34.693409"],
];

function RightDocks() {
  return (
    <aside className="ml-1.5 flex w-[309px] shrink-0 flex-col pt-0.5">
      <DockTitle>Color Map</DockTitle>
      <div className="mt-px h-[200px] border border-[#e0e0e0]">
        <div className="grid grid-cols-[80px_98px_41px_80px] items-center gap-y-px">
          <span className="pr-1 text-right whitespace-nowrap">Color Map:</span>
          <Combo label="Color Map" value="Greys" />
          <Tick label="reverse" className="col-start-4" />
          <span className="justify-self-end pr-1 whitespace-nowrap">Minimum Value:</span>
          <Spin label="Minimum Value" value="-1" align="text-left" className="h-[18px]" />
          <Tick label="show under" className="col-start-4" />
          <span className="justify-self-end pr-0.5 whitespace-nowrap">Maximum Value:</span>
          <Spin label="Maximum Value" value="4732.568359" align="text-left" className="h-[18px]" />
          <Tick label="show over" className="col-start-4" />
          <Btn className="col-start-2">B&amp;C</Btn>
          <span className="text-center whitespace-nowrap">Scaling:</span>
          <Combo label="Scaling" value="log" />
        </div>
      </div>
      <div className="mt-[7px] flex flex-col">
        <DockTitle>Image Mode</DockTitle>
      </div>
      <div className="mt-[11px] pl-0.5">
        <Tabs items={[["Raw", "w-[42px]"], ["Cartesian", "w-[69px]"], ["Polar", "w-[49px]"]]} active="Polar" />
      </div>
      <div className="mr-[3px] ml-0.5 flex h-[264px] flex-col border border-[#e0e0e0] bg-[#f9f9f9]">
        <div className="grid grid-cols-[86px_30px_63px_28px_94px] items-center border-b border-[#a0a0a0]">
          <span className="text-right">Pixel Size:</span>
          <span className="pr-0.5 text-right">2θ:</span>
          <Spin label="2θ pixel size" value="0.01°" className="h-[18px]" />
          <span className="pr-0.5 text-right">η:</span>
          <Spin label="η pixel size" value="0.25°" className="h-[18px]" />
          <span className="text-right">2θ Range:</span>
          <span className="pr-0.5 text-right">min</span>
          <Spin label="2θ min" value="17.12677116°" align="text-left" className="h-[18px]" />
          <span className="pr-1 text-right">max</span>
          <Spin label="2θ max" value="71.77593465°" className="h-[18px]" />
          <span className="text-right">η Range:</span>
          <span className="pr-0.5 text-right">min</span>
          <Spin label="η min" value="-35°" className="h-[18px]" />
          <span className="pr-1 text-right">max</span>
          <Spin label="η max" value="200°" className="h-[18px]" />
        </div>
        <div className="border-b border-[#a0a0a0] pb-px">
          <div className="grid grid-cols-[86px_30px_60px_31px_94px] items-center pt-[3px]">
            <Tick label="Apply SNIP?" />
            <span className="pr-0.5 text-right">w:</span>
            <Spin label="w" value="0.2°" off="light" className="h-[18px]" />
            <span className="text-right whitespace-nowrap">n iter:</span>
            <Spin label="n iter" value="2" off="light" className="h-[18px]" />
          </div>
          <div className="mt-px flex items-center">
            <Combo label="SNIP type" value="Fast SNIP 1D" className="w-[89px]" />
            <Btn className="ml-[14px] w-[76px]">Show SNIP</Btn>
            <Tick label="Apply erosion?" disabled className="ml-[29px]" />
          </div>
        </div>
        <div className="mt-0.5 flex items-center justify-between pr-px">
          <Tick label="Apply 2θ distortion?" disabled />
          <Combo label="Distortion overlay" value="" disabled look="border-[#e6e6e6] bg-[#f6f6f6]" className="w-[121px]" />
        </div>
      </div>
      <div className="mt-[7px] flex flex-col">
        <DockTitle>Messages</DockTitle>
      </div>
      <div className="mt-[20px] mr-[18px] mb-[36px] ml-[18px] flex min-h-0 flex-1 flex-col">
        <div role="log" className="min-h-0 flex-1 border border-[#e8e8e8] border-b-[#868686] bg-white px-[3px] pt-[3px] leading-[13px] whitespace-nowrap text-[#008000]">
          <div className="text-[#ff0000]">State file found to contain issue #1227. Fixing it up...</div>
          {CLICKS.map(([x, y, xd, yd]) => (
            <div key={xd + yd}>
              single click: button=1, x={x}, y={y},<br />
              xdata={xd}, ydata={yd}
            </div>
          ))}
        </div>
        <div className="mt-[7px] grid grid-cols-2 gap-2">
          <Btn>Copy</Btn>
          <Btn>Clear</Btn>
        </div>
      </div>
    </aside>
  );
}

function MainWindow() {
  return (
    <section className="absolute top-0 right-[79px] bottom-[3px] left-[525px] flex flex-col border border-[#757575] bg-[#efefef] shadow-[0_0_24px_rgba(0,0,0,0.4)]">
      <header className="flex h-[30px] shrink-0 items-center bg-[#f3f3f3] pl-2 font-['Open_Sans',sans-serif] text-[12px] text-[#909090]">
        <span className="grid size-4 place-items-center bg-black text-[5px] font-bold text-[#0a5a0a]">heXRD</span>
        <span className="ml-[5px] flex-1">HEXRD</span>
        <button type="button" aria-label="Minimize" className="mr-[34px]">
          <Minus className="size-3 text-[#888]" strokeWidth={2} />
        </button>
        <button type="button" aria-label="Maximize" className="mr-[33px]">
          <Square className="size-3 text-[#777]" strokeWidth={2} />
        </button>
        <button type="button" aria-label="Close" className="mr-[15px]">
          <X className="size-3.5 text-[#888]" strokeWidth={1.8} />
        </button>
      </header>
      <nav className="flex h-[21px] shrink-0 items-center gap-[15px] bg-white pt-0.5 pl-2 font-['Open_Sans',sans-serif] text-[12px] text-[#a0a0a0]">
        {["File", "Edit", "View", "Run", "Help"].map((m) => (
          <button key={m} type="button">
            {m}
          </button>
        ))}
      </nav>
      <div className="flex min-h-0 flex-1">
        <Configuration />
        <Canvas />
        <RightDocks />
      </div>
    </section>
  );
}

/* ---------- overlay manager window ---------- */

function OverlayWindow() {
  return (
    <section className="absolute top-[31px] left-[19px] flex h-[847px] w-[494px] flex-col overflow-hidden rounded-t border border-[#8fa5b5] bg-[#efefef] shadow-[0_0_12px_rgba(0,0,0,0.25)]">
      <ToolTitle right="mr-px">hexrd</ToolTitle>
      <div className="mr-[7px] ml-1.5 mt-[5px] flex h-[151px] flex-col border border-[#828790] bg-white font-['Open_Sans',sans-serif] text-[12px]">
        <table className="w-full table-fixed border-collapse">
          <colgroup>
            <col className="w-[15px]" />
            <col className="w-[78px]" />
            <col className="w-[75px]" />
            <col className="w-[105px]" />
            <col />
          </colgroup>
          <thead>
            <tr className="h-[23px] bg-[#bcdcf4]">
              <td className="bg-white" />
              <th>Name</th>
              <th>Material</th>
              <th>Type</th>
              <th>Visible</th>
            </tr>
          </thead>
          <tbody>
            <tr className="h-[30px] border-b border-[#d4d4d4] bg-[#efefef]">
              <th className="bg-[#bcdcf4]">1</th>
              <td className="border-r border-[#d4d4d4] text-center whitespace-nowrap">CeO2 powder</td>
              <td className="border-r border-[#d4d4d4] px-px">
                <Combo label="Overlay material" value="CeO2" className="[&>select]:h-7 [&>svg]:top-2" />
              </td>
              <td className="border-r border-[#d4d4d4] px-px">
                <Combo label="Overlay type" value="Powder" className="[&>select]:h-7 [&>svg]:top-2" />
              </td>
              <td>
                <Tick label="Visible" checked hidden className="justify-center" />
              </td>
            </tr>
          </tbody>
        </table>
        <div className="w-[15px] flex-1 bg-[#efefef]" />
      </div>
      <div className="mr-2 ml-[7px] mt-1.5 grid grid-cols-2 gap-2">
        <Btn>Add</Btn>
        <Btn>Remove</Btn>
        <Btn className="col-span-2">Edit Style</Btn>
      </div>
      <div className="mr-2 ml-1.5 mt-[7px] mb-[7px] flex-1 border border-[#e4e4e4] bg-[#f9f9f9] px-3 pt-[13px]">
        <Btn className="w-full">Reflections Table</Btn>
        <div className="mt-1.5 flex items-center justify-between">
          <Tick label="Enable Width" />
          <Spin label="Width" value="0.25°" off="dark" className="h-[19px] w-[316px]" />
        </div>
        <div className="mt-1.5 border border-t-0 border-[#dcdcdc] px-2 pt-[9px] pb-[9px]">
          <div className="flex items-center gap-[7px]">
            <span>Distortion:</span>
            <Combo label="Distortion" value="Offset" className="flex-1" />
          </div>
          <div className="mt-1.5 flex items-center gap-[7px] border border-[#e4e4e4] py-[13px] pr-[15px] pl-[11px]">
            <span className="flex-1">Offset:</span>
            {["x", "y", "z"].map((a) => (
              <Spin key={a} label={`Offset ${a}`} value="0 mm" wide className="h-[30px] w-[95px]" />
            ))}
          </div>
        </div>
        <Tick label="Clip with panel buffer?" className="mt-2 h-[15px]" />
        <fieldset className="mt-[5px] h-[264px] border border-[#dcdcdc] px-[9px]">
          <legend className="-ml-1 px-0.5 leading-[14px]">Refinements</legend>
          <div className="mt-2.5 h-[192px] border border-[#828790] bg-white">
            <table className="w-full table-fixed border-collapse">
              <tbody>
                <tr className="h-[30px] border-b border-[#d4d4d4]">
                  <td className="w-[39px] border-r border-[#d4d4d4] text-center">a</td>
                  <td>
                    <Tick label="Refine a" hidden className="justify-center" />
                  </td>
                </tr>
              </tbody>
            </table>
          </div>
        </fieldset>
      </div>
    </section>
  );
}

/* ---------- reflections table window ---------- */

const ROWS = [
  ["0", "1 1 1", "3.12", "22.79", "100.00", "100.00", "8"],
  ["1", "2 0 0", "2.71", "26.37", "44.98", "24.82", "6"],
  ["2", "2 2 0", "1.91", "37.64", "52.19", "26.74", "12"],
  ["3", "3 1 1", "1.63", "44.45", "19.53", "13.81", "24"],
  ["4", "2 2 2", "1.56", "46.54", "10.37", "2.21", "8"],
  ["5", "4 0 0", "1.35", "54.28", "10.77", "1.21", "6"],
];

function ReflectionsWindow() {
  return (
    <section className="absolute top-[609px] left-[79px] h-[250px] w-[566px] overflow-hidden rounded-t-md border border-[#b5b5b5] bg-[#efefef] font-['Open_Sans',sans-serif] text-[12px] shadow-[0_0_14px_rgba(0,0,0,0.25)]">
      <ToolTitle right="mr-px">CeO2</ToolTitle>
      <div className="flex h-full border border-[#828790]">
        <div className="mr-px flex-1">
          <table className="w-full table-fixed border-collapse text-center">
            <colgroup>
              <col className="w-[69px]" />
              <col className="w-[70px]" />
              <col className="w-[80px]" />
              <col className="w-[70px]" />
              <col className="w-[70px]" />
              <col className="w-[70px]" />
              <col />
            </colgroup>
            <thead>
              <tr className="h-[23px] bg-white">
                {["ID", "{hkl}", "d-spacing (Å)", "2θ (°)"].map((h) => (
                  <th key={h} className="border-r border-[#e4e4e4] whitespace-nowrap">
                    {h}
                  </th>
                ))}
                <th className="border-r border-[#e4e4e4] leading-none">
                  |F|<sup className="text-[8px]">2</sup>
                </th>
                <th className="border-r border-[#e4e4e4] leading-none">
                  I<sub className="text-[8px]">p</sub>
                </th>
                <th className="border-r border-[#e4e4e4]">Multiplicity</th>
              </tr>
            </thead>
            <tbody>
              {ROWS.map((r) => (
                <tr key={r[0]} className="h-[30px] border-b border-[#d4d4d4]">
                  {r.map((c, i) => (
                    <td key={i} className="border-r border-[#d4d4d4]">
                      {c}
                    </td>
                  ))}
                </tr>
              ))}
            </tbody>
          </table>
        </div>
        <div className="flex w-4 justify-center bg-[#efefef] pt-[17px]">
          <div className="w-0.5 rounded bg-[#868686]" />
        </div>
      </div>
    </section>
  );
}

/* ---------- photo viewer ---------- */

function GalleryIcon() {
  return (
    <svg viewBox="0 0 16 16" className="size-4 fill-none stroke-white stroke-[1.1]">
      <rect x="1.5" y="1" width="11.500" height="12" rx="2" />
      <path d="M3 15h8.500A3.500 3.500 0 0 0 15 11.500V3.500M2 12l4.200-4.500a1.400 1.400 0 0 1 2 0L12.500 12" />
      <circle cx="9.500" cy="4.500" r="1" />
    </svg>
  );
}

function EditIcon() {
  return (
    <svg viewBox="0 0 16 16" className="size-4 fill-none stroke-white">
      <path d="M6.500 14.500H2A1.500 1.500 0 0 1 .500 13V2A1.500 1.500 0 0 1 2 .500h11A1.500 1.500 0 0 1 14.500 2v4M1 13.500l4.800-5.200 2.700 2.200" />
      <circle cx="10.500" cy="4.500" r="1.200" />
      <path d="M8 15.500l.8-2.900 5-5 2 2-5 5z" fill="#fff" />
    </svg>
  );
}

function RotateIcon() {
  return (
    <svg viewBox="0 0 16 16" className="size-4 fill-none stroke-white stroke-[1.2]">
      <path d="M.7 9A7.300 7.300 0 1 1 12 14.500M11.500 10.500V15.300H16" />
      <circle cx="8" cy="8" r="1.400" />
    </svg>
  );
}

function TrashIcon() {
  return (
    <svg viewBox="0 0 16 16" className="size-4 fill-none stroke-white stroke-[1.2]">
      <path d="M.5 2.600h15M5.500 2.500a2.500 2 0 0 1 5 0M2.300 3l1.200 11a1.500 1.500 0 0 0 1.500 1.400h6a1.500 1.500 0 0 0 1.500-1.400L13.700 3M6.500 6.500v5.500M9.500 6.500v5.500" />
    </svg>
  );
}

function ExpandIcon() {
  return (
    <svg viewBox="0 0 16 16" className="size-4 fill-none stroke-white stroke-[1.2]">
      <path d="M1.500 14.500l13-13M8.500 1.500h6v6M1.500 8.500v6h6" />
    </svg>
  );
}

function DotsIcon() {
  return (
    <svg viewBox="0 0 16 16" className="size-4 fill-white">
      <circle cx="1.700" cy="8.500" r="1.500" />
      <circle cx="8" cy="8.500" r="1.500" />
      <circle cx="14.300" cy="8.500" r="1.500" />
    </svg>
  );
}

function PhotosWindow() {
  return (
    <section className="absolute top-[848px] left-[30px] w-[1239px] overflow-hidden rounded-lg bg-[#202020] pb-1 font-['Open_Sans',sans-serif] text-[12px] text-white shadow-[0_10px_34px_rgba(0,0,0,0.5)]">
      <header className="flex h-[52px] items-center">
        <button type="button" aria-label="Gallery" className="mb-1 grid h-12 w-12 place-items-center bg-[#2b2b2b]">
          <GalleryIcon />
        </button>
        <span className="ml-5 w-[464px]">MEC_EPix_setup_cartesian.png</span>
        <div className="flex items-center gap-6 pb-1">
          <button type="button" aria-label="Edit">
            <EditIcon />
          </button>
          <button type="button" aria-label="Rotate">
            <RotateIcon />
          </button>
          <button type="button" aria-label="Delete">
            <TrashIcon />
          </button>
          <button type="button" aria-label="Favourite">
            <Heart className="size-4 text-[#777]" strokeWidth={1.6} />
          </button>
          <button type="button" aria-label="More">
            <DotsIcon />
          </button>
        </div>
        <div className="ml-[183px] flex items-center gap-6 pb-1">
          <button type="button" aria-label="Full screen">
            <ExpandIcon />
          </button>
          <button type="button" aria-label="Actual size" className="grid h-[13px] w-4 place-items-center rounded-xs border border-white text-[8px] leading-none font-bold">
            1:1
          </button>
          <button type="button" aria-label="Zoom out">
            <ZoomOut className="size-4" strokeWidth={1.6} />
          </button>
          <button type="button" aria-label="Zoom in">
            <ZoomIn className="size-4" strokeWidth={1.6} />
          </button>
          <span className="pr-2">116%</span>
        </div>
        <div className="mr-4 mb-5 ml-auto flex items-center gap-[34px] text-[#8a8a8a]">
          <button type="button" aria-label="Minimize">
            <Minus className="size-3" strokeWidth={1.8} />
          </button>
          <button type="button" aria-label="Maximize">
            <Square className="size-3" strokeWidth={1.8} />
          </button>
          <button type="button" aria-label="Close">
            <X className="size-3.5" strokeWidth={1.5} />
          </button>
        </div>
      </header>
      <div className="bg-white">
        <CartesianPlot />
      </div>
    </section>
  );
}

export default function App() {
  return (
    <div className="relative h-screen w-full overflow-hidden bg-linear-to-b from-[#84adca] via-[#90b3cf] to-[#a6bfda] font-['DejaVu_Sans_Condensed','DejaVu_Sans',sans-serif] text-[11px] text-black">
      <div className="absolute inset-x-0 bottom-0 h-0.5 bg-[#e4e6ea]" />
      <MainWindow />
      <OverlayWindow />
      <ReflectionsWindow />
      <PhotosWindow />
    </div>
  );
}
